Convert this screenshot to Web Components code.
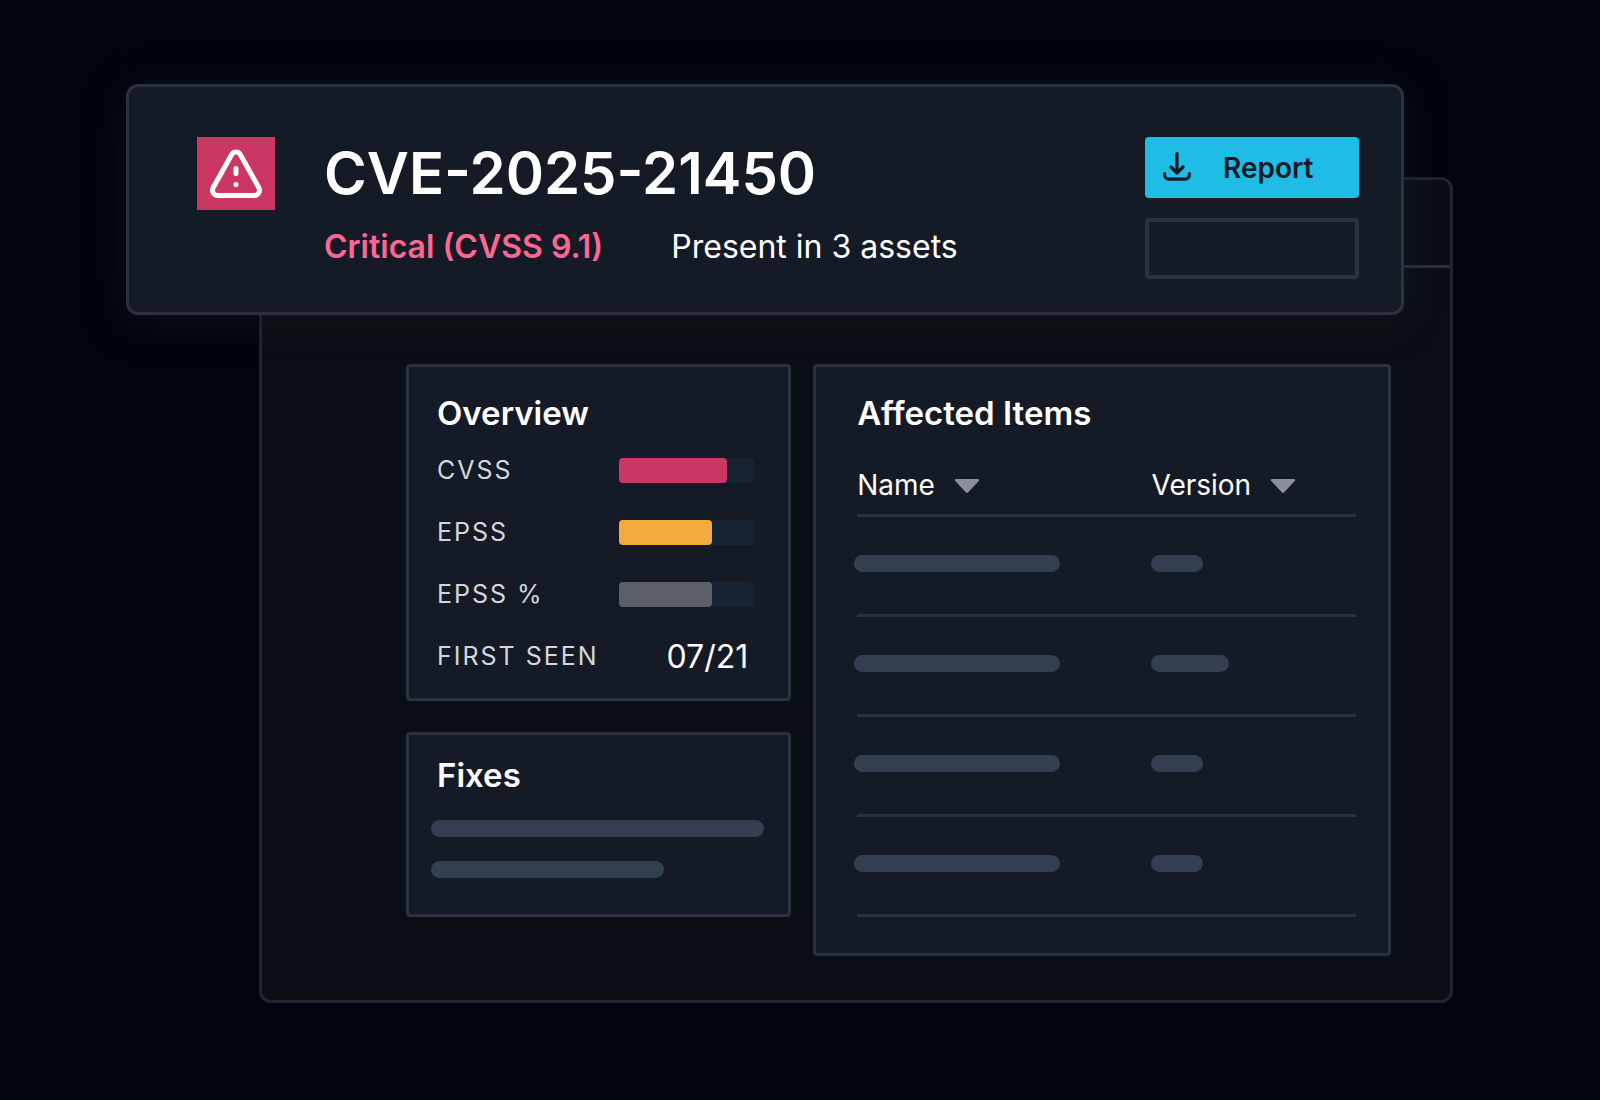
<!DOCTYPE html>
<html lang="en">
<head>
<meta charset="utf-8">
<title>CVE-2025-21450</title>
<style>
  :root {
    --page: #00040f;
    --window: #0a0f16;
    --panel: #141b26;
    --line: #2a3140;
    --window-line: #1e2530;
    --skeleton: #333e50;
    --track: #182433;
    --text: #ffffff;
    --label: #d3d6da;
    --muted: #8a8f99;
    --accent: #1fbce5;
    --critical: #cc3662;
    --critical-text: #ff6694;
    --warning: #f4a93c;
    --neutral: #5b5f68;
  }
  body {
    margin: 0;
    min-height: 100vh;
    background: var(--page);
    color: var(--text);
    font-family: Inter, "Liberation Sans", sans-serif;
  }
</style>
</head>
<body>
<cve-board>
  <cve-header slot="header">
    <span slot="title">CVE-2025-21450</span>
    <span slot="severity">Critical (CVSS 9.1)</span>
    <span slot="presence">Present in 3 assets</span>
    <report-button slot="actions">Report</report-button>
    <ghost-button slot="actions"></ghost-button>
  </cve-header>
  <detail-window slot="window">
    <info-card slot="side" heading="Overview">
      <score-row label="CVSS" value="80" tone="critical"></score-row>
      <score-row label="EPSS" value="69" tone="warning"></score-row>
      <score-row label="EPSS %" value="69" tone="neutral"></score-row>
      <score-row label="FIRST SEEN">07/21</score-row>
    </info-card>
    <info-card slot="side" heading="Fixes" class="fixes">
      <fix-list></fix-list>
    </info-card>
    <info-card slot="main" heading="Affected Items" class="wide">
      <affected-table></affected-table>
    </info-card>
  </detail-window>
</cve-board>

<script>
class CveBoard extends HTMLElement {
  constructor() {
    super();
    this.attachShadow({ mode: "open" });
    // header and window share grid cells, so the header overlaps the window
    this.shadowRoot.innerHTML = `
      <style>
        :host {
          display: grid;
          grid-template-columns: 133px minmax(0, 1fr) 49px;
          grid-template-rows: 93px minmax(138px, auto) auto;
          padding: 84px 147px 96px 126px;
        }
        slot[name="window"]::slotted(*) {
          grid-column: 2 / 4;
          grid-row: 2 / 4;
        }
        slot[name="header"]::slotted(*) {
          grid-column: 1 / 3;
          grid-row: 1 / 3;
          z-index: 1;
        }
      </style>
      <slot name="header"></slot>
      <slot name="window"></slot>
    `;
  }
}

class CveHeader extends HTMLElement {
  constructor() {
    super();
    this.attachShadow({ mode: "open" });
    this.shadowRoot.innerHTML = `
      <style>
        :host {
          display: flex;
          align-items: flex-start;
          gap: 49px;
          padding: 50px 42px 33px 68px;
          border: 3px solid var(--line);
          border-radius: 12px;
          background: var(--panel);
          box-shadow: 0 6px 40px rgba(30, 31, 26, 0.45);
        }
        .badge {
          display: grid;
          place-items: center;
          flex: none;
          width: 78px;
          height: 73px;
          background: var(--critical);
        }
        .info {
          flex: 1;
        }
        h1 {
          margin: 0;
          font-size: 58px;
          font-weight: 600;
          line-height: 72px;
        }
        .meta {
          display: flex;
          gap: 68px;
          margin-top: 18px;
          font-size: 32px;
          line-height: 40px;
        }
        .severity {
          color: var(--critical-text);
          font-weight: 600;
        }
        .actions {
          display: flex;
          flex-direction: column;
          gap: 20px;
          width: 214px;
        }
      </style>
      <div class="badge">
        <svg width="54" height="50" viewBox="0 0 54 50" fill="none" stroke="#fff" stroke-width="5" stroke-linecap="round" stroke-linejoin="round" aria-hidden="true">
          <path d="M22.6 5.800 4.400 38.200C2.200 42.200 4.600 46.500 9 46.500h36c4.400 0 6.800-4.300 4.600-8.300L31.400 5.800c-2-3.600-6.800-3.600-8.800 0z"/>
          <path d="M27 19.500v5M27 35.500v.1"/>
        </svg>
      </div>
      <div class="info">
        <h1><slot name="title"></slot></h1>
        <div class="meta">
          <span class="severity"><slot name="severity"></slot></span>
          <span><slot name="presence"></slot></span>
        </div>
      </div>
      <div class="actions"><slot name="actions"></slot></div>
    `;
  }
}

class ReportButton extends HTMLElement {
  constructor() {
    super();
    this.attachShadow({ mode: "open" });
    this.shadowRoot.innerHTML = `
      <style>
        :host {
          display: block;
        }
        button {
          display: flex;
          align-items: center;
          gap: 31px;
          width: 100%;
          height: 61px;
          padding: 0 17px;
          border: 0;
          border-radius: 4px;
          background: var(--accent);
          color: var(--panel);
          font: 600 28px/32px Inter, "Liberation Sans", sans-serif;
          cursor: pointer;
        }
      </style>
      <button type="button">
        <svg width="30" height="32" viewBox="0 0 30 32" fill="none" stroke="currentColor" stroke-width="3.2" stroke-linecap="round" stroke-linejoin="round" aria-hidden="true">
          <path d="M15 1.600v19M9 15l6 6 6-6"/>
          <path d="M2.600 21.500v1.200a4.400 4.400 0 0 0 4.400 4.400h16a4.400 4.400 0 0 0 4.400-4.400v-1.200"/>
        </svg>
        <slot></slot>
      </button>
    `;
  }
}

class GhostButton extends HTMLElement {
  constructor() {
    super();
    this.attachShadow({ mode: "open" });
    this.shadowRoot.innerHTML = `
      <style>
        :host {
          display: block;
        }
        button {
          display: block;
          width: 100%;
          height: 61px;
          border: 4px solid var(--line);
          border-radius: 4px;
          background: none;
        }
      </style>
      <button type="button" aria-label="More actions"></button>
    `;
  }
}

class DetailWindow extends HTMLElement {
  constructor() {
    super();
    this.attachShadow({ mode: "open" });
    this.shadowRoot.innerHTML = `
      <style>
        :host {
          display: block;
          border: 3px solid var(--window-line);
          border-radius: 12px;
          background: var(--window);
        }
        .bar {
          height: 85px;
          border-bottom: 3px solid var(--line);
        }
        .content {
          display: grid;
          grid-template-columns: 2fr 3fr;
          align-items: start;
          gap: 22px;
          padding: 96px 59px 44px 144px;
        }
        .side {
          display: flex;
          flex-direction: column;
          gap: 31px;
        }
      </style>
      <div class="bar"></div>
      <div class="content">
        <div class="side"><slot name="side"></slot></div>
        <slot name="main"></slot>
      </div>
    `;
  }
}

class InfoCard extends HTMLElement {
  constructor() {
    super();
    this.attachShadow({ mode: "open" });
    this.shadowRoot.innerHTML = `
      <style>
        :host {
          display: block;
          padding: 26px 34px 11px 28px;
          border: 3px solid var(--line);
          border-radius: 4px;
          background: var(--panel);
        }
        :host(.fixes) {
          padding: 20px 24px 36px 22px;
        }
        :host(.fixes) h2 {
          padding-left: 6px;
        }
        :host(.wide) {
          padding: 26px 32px 36px 41px;
        }
        h2 {
          margin: 0;
          font-size: 33px;
          font-weight: 600;
          line-height: 40px;
        }
        .body {
          padding-top: 6px;
        }
      </style>
      <h2></h2>
      <div class="body"><slot></slot></div>
    `;
    this.titleElement = this.shadowRoot.querySelector("h2");
  }

  static get observedAttributes() {
    return ["heading"];
  }

  attributeChangedCallback(name, oldValue, newValue) {
    this.titleElement.textContent = newValue;
  }
}

class ScoreRow extends HTMLElement {
  constructor() {
    super();
    this.attachShadow({ mode: "open" });
    this.shadowRoot.innerHTML = `
      <style>
        :host {
          display: flex;
          justify-content: space-between;
          align-items: center;
          height: 62px;
        }
        .label {
          color: var(--label);
          font-size: 25px;
          letter-spacing: 2px;
        }
        .track {
          width: 135px;
          height: 25px;
          border-radius: 4px;
          background: var(--track);
        }
        .fill {
          height: 100%;
          border-radius: 4px;
        }
        .value {
          padding-right: 6px;
          font-size: 32px;
        }
      </style>
      <span class="label"></span>
    `;
  }

  connectedCallback() {
    const label = this.getAttribute("label");
    this.shadowRoot.querySelector(".label").textContent = label;
    const value = this.getAttribute("value");
    if (value === null) {
      this.shadowRoot.innerHTML += `<span class="value"><slot></slot></span>`;
      return;
    }
    this.shadowRoot.innerHTML += `
      <div class="track" role="meter" aria-label="${label}" aria-valuemin="0" aria-valuemax="100" aria-valuenow="${value}">
        <div class="fill" style="width: ${value}%; background: var(--${this.getAttribute("tone")})"></div>
      </div>
    `;
  }
}

class SkeletonLine extends HTMLElement {
  constructor() {
    super();
    this.attachShadow({ mode: "open" });
    this.shadowRoot.innerHTML = `
      <style>
        :host {
          display: block;
          height: 17px;
          border-radius: 9px;
          background: var(--skeleton);
        }
      </style>
    `;
  }
}

class FixList extends HTMLElement {
  constructor() {
    super();
    this.attachShadow({ mode: "open" });
    this.shadowRoot.innerHTML = `
      <style>
        :host {
          display: flex;
          flex-direction: column;
          gap: 24px;
          padding-top: 19px;
        }
        .short {
          width: 70%;
        }
      </style>
      <skeleton-line></skeleton-line>
      <skeleton-line class="short"></skeleton-line>
    `;
  }
}

class AffectedTable extends HTMLElement {
  constructor() {
    super();
    this.attachShadow({ mode: "open" });
    const arrow = `
      <svg width="26" height="16" viewBox="0 0 26 16" fill="var(--muted)" aria-hidden="true">
        <path d="M2 2h22c1.200 0 1.600 1.200.800 2L14.200 15.200c-.700.700-1.700.700-2.400 0L1.200 4C.400 3.200.800 2 2 2z"/>
      </svg>`;
    const rows = ["", "long", "", ""].map((size) => `
      <tr>
        <td><skeleton-line class="name"></skeleton-line></td>
        <td><skeleton-line class="version ${size}"></skeleton-line></td>
      </tr>`).join("");
    this.shadowRoot.innerHTML = `
      <style>
        :host {
          display: block;
          padding-top: 31px;
        }
        table {
          width: 100%;
          border-spacing: 0;
          table-layout: fixed;
        }
        th, td {
          padding: 0;
          border-bottom: 3px solid var(--line);
          text-align: left;
        }
        th {
          padding-bottom: 14px;
        }
        th:first-child {
          width: 59%;
        }
        button {
          display: flex;
          align-items: center;
          gap: 19px;
          padding: 0;
          border: 0;
          background: none;
          color: inherit;
          font: 400 28px/30px Inter, "Liberation Sans", sans-serif;
          cursor: pointer;
        }
        td {
          padding: 38px 0 42px;
        }
        .name {
          width: 206px;
          margin-left: -3px;
        }
        .version {
          width: 52px;
        }
        .long {
          width: 78px;
        }
      </style>
      <table>
        <thead>
          <tr>
            <th scope="col"><button type="button">Name ${arrow}</button></th>
            <th scope="col"><button type="button">Version ${arrow}</button></th>
          </tr>
        </thead>
        <tbody>${rows}</tbody>
      </table>
    `;
  }
}

customElements.define("cve-board", CveBoard);
customElements.define("cve-header", CveHeader);
customElements.define("report-button", ReportButton);
customElements.define("ghost-button", GhostButton);
customElements.define("detail-window", DetailWindow);
customElements.define("info-card", InfoCard);
customElements.define("score-row", ScoreRow);
customElements.define("skeleton-line", SkeletonLine);
customElements.define("fix-list", FixList);
customElements.define("affected-table", AffectedTable);
</script>
</body>
</html>
